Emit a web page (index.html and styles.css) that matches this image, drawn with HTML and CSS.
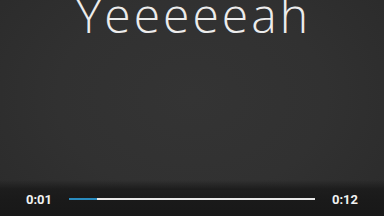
FILE: index.html
```html
<!DOCTYPE html>
<html>
<head>
<meta charset="utf-8">
<link rel="stylesheet" href="styles.css">
</head>
<body>
<div class="player">
  <div class="caption">Yeeeeeah</div>
  <div class="controls">
    <span class="time">0:01</span>
    <div class="track"><div class="played" style="width:11.3%"></div></div>
    <span class="time">0:12</span>
  </div>
</div>
</body>
</html>
```
FILE: styles.css
```css
html, body {
  margin: 0;
  padding: 0;
  background: #2a2a2a;
}
.player {
  width: 384px;
  height: 216px;
  overflow: hidden;
  display: flex;
  flex-direction: column;
  background: radial-gradient(ellipse 70% 90% at 50% 45%, #343434 0%, #313131 50%, #2a2a2a 100%);
}
.caption {
  flex: 1;
  margin-top: -15px;
  padding-left: 3px;
  text-align: center;
  font-family: "Open Sans", sans-serif;
  font-weight: 300;
  font-size: 48px;
  line-height: 60px;
  color: #ececec;
  letter-spacing: 3px;
}
.controls {
  height: 36px;
  display: flex;
  align-items: center;
  gap: 17px;
  padding: 2px 26px 0 26px;
  box-sizing: border-box;
  background: linear-gradient(to bottom, rgba(26,26,26,0) 0%, rgba(26,26,26,0.85) 25%, #1a1a1a 55%, #181818 100%);
}
.time {
  font-family: Roboto, "Liberation Sans", sans-serif;
  font-weight: 700;
  font-size: 13px;
  color: #f2f2f2;
}
.track {
  flex: 1;
  height: 2px;
  background: #e8e8e8;
  display: flex;
}
.played {
  background: #2a8cbf;
  height: 100%;
}
```
